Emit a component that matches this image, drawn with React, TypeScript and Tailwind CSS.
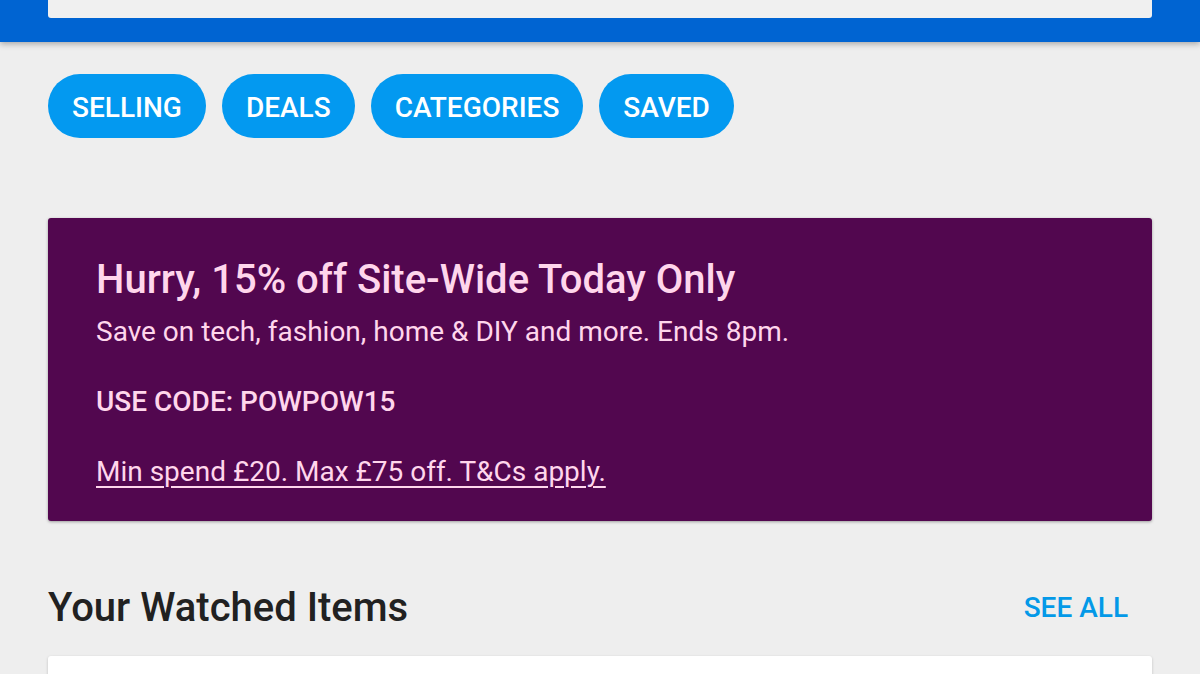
import React from 'react'

const App = () => {
    const chips = ["SELLING", "DEALS", "CATEGORIES", "SAVED"]

    return (
        <div className="w-[1200px] h-[674px] overflow-hidden bg-[#eeeeee] font-['Roboto',sans-serif]">
            <header className="bg-[#0064d2] h-[42px] px-12 shadow-[0_2px_6px_rgba(0,0,0,0.3)] relative z-10">
                <div className="h-[18px] bg-[#f0f0f0] rounded-b-[3px]" />
            </header>

            <div className="px-12">
                <div className="flex gap-4 pt-8">
                    {chips.map((chip) => (
                        <button
                            key={chip}
                            className="h-16 px-6 pt-[3px] rounded-full bg-[#0399f0] text-white text-[28px] font-medium leading-none"
                        >
                            {chip}
                        </button>
                    ))}
                </div>

                <section className="mt-20 h-[303px] bg-[#52074f] rounded-[3px] shadow-[0_1px_3px_rgba(0,0,0,0.35)] px-12 pt-[38px] text-[#ffd6ec]">
                    <h2 className="text-[40px] font-medium leading-[48px]">Hurry, 15% off Site-Wide Today Only</h2>
                    <p className="text-[28px] leading-[36px] mt-[10px]">Save on tech, fashion, home &amp; DIY and more. Ends 8pm.</p>
                    <p className="text-[28px] font-medium leading-[36px] mt-[34px]">USE CODE: POWPOW15</p>
                    <a className="block text-[28px] leading-[36px] mt-[34px] underline underline-offset-[5px] decoration-[2px]">
                        Min spend £20. Max £75 off. T&amp;Cs apply.
                    </a>
                </section>

                <div className="flex items-center justify-between mt-[62px] pr-6">
                    <h2 className="text-[40px] font-medium text-[#212121] leading-[50px]">Your Watched Items</h2>
                    <a className="text-[28px] font-medium text-[#0399e8]">SEE ALL</a>
                </div>

                <div className="mt-[23px] h-[100px] bg-white rounded-[3px] shadow-[0_1px_3px_rgba(0,0,0,0.2)]" />
            </div>
        </div>
    )
}

export default App
